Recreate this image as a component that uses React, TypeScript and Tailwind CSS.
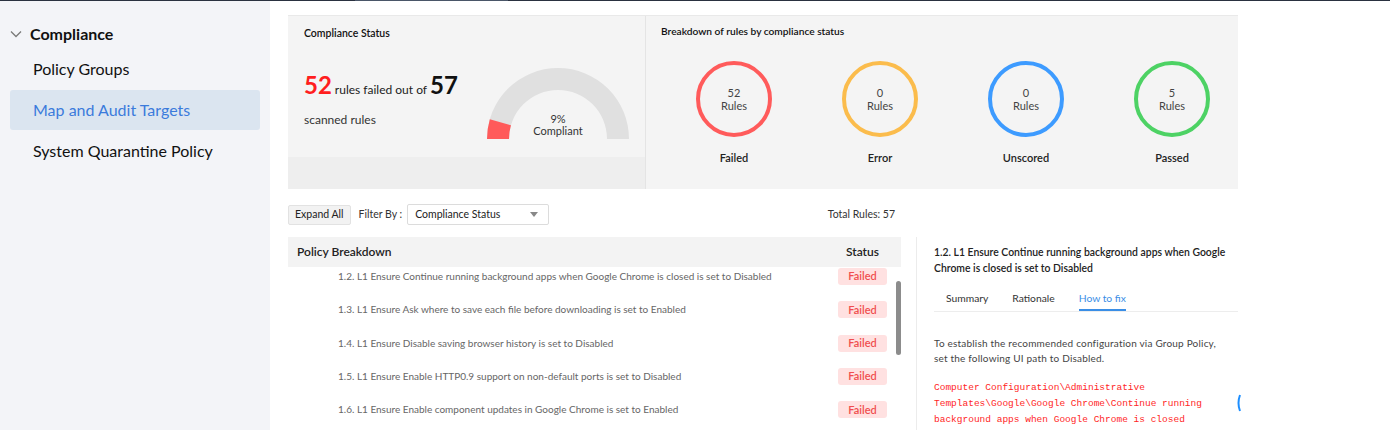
import React from "react"

const rules = [
  "1.2. L1 Ensure Continue running background apps when Google Chrome is closed is set to Disabled",
  "1.3. L1 Ensure Ask where to save each file before downloading is set to Enabled",
  "1.4. L1 Ensure Disable saving browser history is set to Disabled",
  "1.5. L1 Ensure Enable HTTP0.9 support on non-default ports is set to Disabled",
  "1.6. L1 Ensure Enable component updates in Google Chrome is set to Enabled",
]

const breakdown = [
  { n: 52, label: "Failed", ring: "border-[#ff5b5b]" },
  { n: 0, label: "Error", ring: "border-[#fbbc4c]" },
  { n: 0, label: "Unscored", ring: "border-[#3d9bff]" },
  { n: 5, label: "Passed", ring: "border-[#4dd264]" },
]

function Sidebar() {
  return (
    <aside className="w-[270px] shrink-0 bg-[#f3f4f8] h-full">
      <div className="mt-[21px] flex items-center h-[24px] pl-[10px]">
        <svg width="12" height="8" viewBox="0 0 12 8" className="mr-[8px]">
          <path d="M1 1.5 L6 6.5 L11 1.5" fill="none" stroke="#7a7a7a" strokeWidth="1.3" />
        </svg>
        <span className="text-[16px] font-bold text-[#111]">Compliance</span>
      </div>
      <nav className="mt-[3px] flex flex-col gap-[1px]">
        <div className="mx-[10px] h-[40px] flex items-center px-[23px] text-[16px] text-[#111]">Policy Groups</div>
        <div className="mx-[10px] h-[40px] flex items-center px-[23px] text-[16px] text-[#3b7bdc] bg-[#dbe5f0] rounded-[3px]">
          Map and Audit Targets
        </div>
        <div className="mx-[10px] h-[40px] flex items-center px-[23px] text-[16px] text-[#111]">System Quarantine Policy</div>
      </nav>
    </aside>
  )
}

function Gauge() {
  return (
    <div className="relative w-[144px] h-[72px]">
      <svg width="144" height="72" viewBox="0 0 144 72">
        <path d="M1 72 A71 71 0 0 1 143 72 L121 72 A49 49 0 0 0 23 72 Z" fill="#e0e0e0" />
        <path d="M1 72 A71 71 0 0 1 3.82 52.19 L24.95 58.33 A49 49 0 0 0 23 72 Z" fill="#ff5a5a" />
      </svg>
      <div className="absolute left-0 right-0 top-[46px] text-center text-[11px] leading-[12px] text-[#333]">
        <div>9%</div>
        <div>Compliant</div>
      </div>
    </div>
  )
}

export default function App() {
  return (
    <div className="w-[1390px] h-[430px] overflow-hidden bg-white flex flex-col relative" style={{ fontFamily: "Lato, 'Noto Sans', sans-serif" }}>
      <div className="h-px bg-[#2a3140] shrink-0 flex">
        <div className="ml-[355px] w-[153px] bg-[#4a5668]" />
      </div>
      <div className="flex flex-1 min-h-0">
        <Sidebar />
        <main className="pl-[18px] pt-[14px] flex flex-col">
          {/* summary cards */}
          <div className="w-[950px] h-[174px] flex border-t border-[#e9e9e9]">
            <div className="w-[357px] shrink-0 bg-[#f4f4f4] flex flex-col">
              <div className="pt-[9px] px-[16px] text-[10.5px] font-semibold leading-[16px] text-[#111]">Compliance Status</div>
              <div className="flex items-start pl-[16px] pr-[15px] mt-[26px]">
                <div className="mt-[3px]">
                  <div className="h-[30px] flex items-baseline">
                    <span className="text-[24px] font-bold text-[#ff1e1e] leading-[30px]">52</span>
                    <span className="text-[12px] text-[#222] ml-[3px]">rules failed out of</span>
                    <span className="text-[24px] font-bold text-[#111] leading-[30px] ml-[3px]">57</span>
                  </div>
                  <div className="mt-[12px] text-[12px] leading-[16px] text-[#333]">scanned rules</div>
                </div>
                <div className="ml-auto">
                  <Gauge />
                </div>
              </div>
              <div className="mt-auto h-[32px] bg-[#eeeeee]" />
            </div>
            <div className="flex-1 min-w-0 bg-[#f4f4f4] border-l border-[#e4e4e4]">
              <div className="pt-[7px] pl-[15px] text-[10.2px] font-semibold leading-[16px] text-[#111]">
                Breakdown of rules by compliance status
              </div>
              <div className="pl-[15px] mt-[22px] grid grid-cols-[146px_146px_146px_146px]">
                {breakdown.map((b) => (
                  <div key={b.label} className="flex flex-col items-center">
                    <div className={`w-[76px] h-[76px] rounded-full border-4 ${b.ring} flex flex-col items-center justify-center text-[11px] leading-[13px] text-[#444]`}>
                      <span>{b.n}</span>
                      <span>Rules</span>
                    </div>
                    <div className="mt-[13px] text-[11px] font-semibold leading-[16px] text-[#222]">{b.label}</div>
                  </div>
                ))}
              </div>
            </div>
          </div>

          {/* filter row */}
          <div className="w-[628px] mt-[15px] h-[21px] flex items-center text-[10.5px] text-[#333]">
            <button className="h-[20px] px-[6px] bg-[#f2f2f2] border border-[#e2e2e2] rounded-[2px] text-[10.5px] text-[#222]">Expand All</button>
            <span className="ml-[8px]">Filter By :</span>
            <div className="ml-[5px] w-[142px] h-[21px] bg-white border border-[#dcdcdc] rounded-[2px] flex items-center pl-[7px] pr-[10px]">
              <span className="text-[#222]">Compliance Status</span>
              <svg width="8" height="5" viewBox="0 0 8 5" className="ml-auto">
                <path d="M0 0 L8 0 L4 5 Z" fill="#888" />
              </svg>
            </div>
            <span className="ml-auto mr-[21px] text-[#333]">Total Rules: 57</span>
          </div>

          {/* bottom split */}
          <div className="mt-[12px] flex flex-1 min-h-0 w-[950px]">
            <div className="w-[628px] shrink-0">
              <div className="w-[613px] h-[30px] bg-[#f3f3f3] flex items-center pl-[9px] text-[12px] font-semibold text-[#222]">
                <span>Policy Breakdown</span>
                <span className="ml-auto w-[49px] mr-[14px] text-center">Status</span>
              </div>
              <div className="relative w-[613px] h-[165px] overflow-hidden">
                <div className="-mt-[7px]">
                  {rules.map((r) => (
                    <div key={r} className="h-[33.3px] flex items-center pl-[50px] pr-[14px]">
                      <span className="text-[10px] text-[#666]">{r}</span>
                      <span className="ml-auto w-[49px] h-[17px] rounded-[3px] bg-[#ffe1e1] text-[#f04f4f] text-[11px] font-semibold flex items-center justify-center">
                        Failed
                      </span>
                    </div>
                  ))}
                </div>
                <div className="absolute right-0 top-[14px] w-[5px] h-[74px] rounded-full bg-[#8c8c8c]" />
              </div>
            </div>
            <div className="flex-1 border-l border-[#ececec] pl-[17px]">
              <div className="pt-[7px] pr-[4px] text-[10.4px] font-semibold leading-[16px] text-[#222]">
                1.2. L1 Ensure Continue running background apps when Google Chrome is closed is set to Disabled
              </div>
              <div className="mt-[14px] flex gap-[24px] pl-[12px] border-b border-[#ededed] text-[10.3px] leading-[16px]">
                <span className="pb-[5px] text-[#333]">Summary</span>
                <span className="pb-[5px] text-[#333]">Rationale</span>
                <span className="pb-[3px] text-[#3a8ee6] border-b-2 border-[#3a8ee6]">How to fix</span>
              </div>
              <div className="mt-[24px] pr-[14px] text-[10px] leading-[15px] tracking-[0.2px] text-[#444]">
                To establish the recommended configuration via Group Policy, set the following UI path to Disabled.
              </div>
              <div className="mt-[14px] w-[288px] text-[9.5px] leading-[16px] text-[#ff2626]" style={{ fontFamily: "'Liberation Mono', monospace" }}>
                Computer Configuration\Administrative Templates\Google\Google Chrome\Continue running background apps when Google Chrome is closed
              </div>
            </div>
          </div>
        </main>
      </div>
      <svg className="absolute left-[1236px] top-[394px]" width="6" height="18" viewBox="0 0 6 18">
        <path d="M4 1 Q1 9 4 17" fill="none" stroke="#1e8fff" strokeWidth="2" />
      </svg>
    </div>
  )
}
